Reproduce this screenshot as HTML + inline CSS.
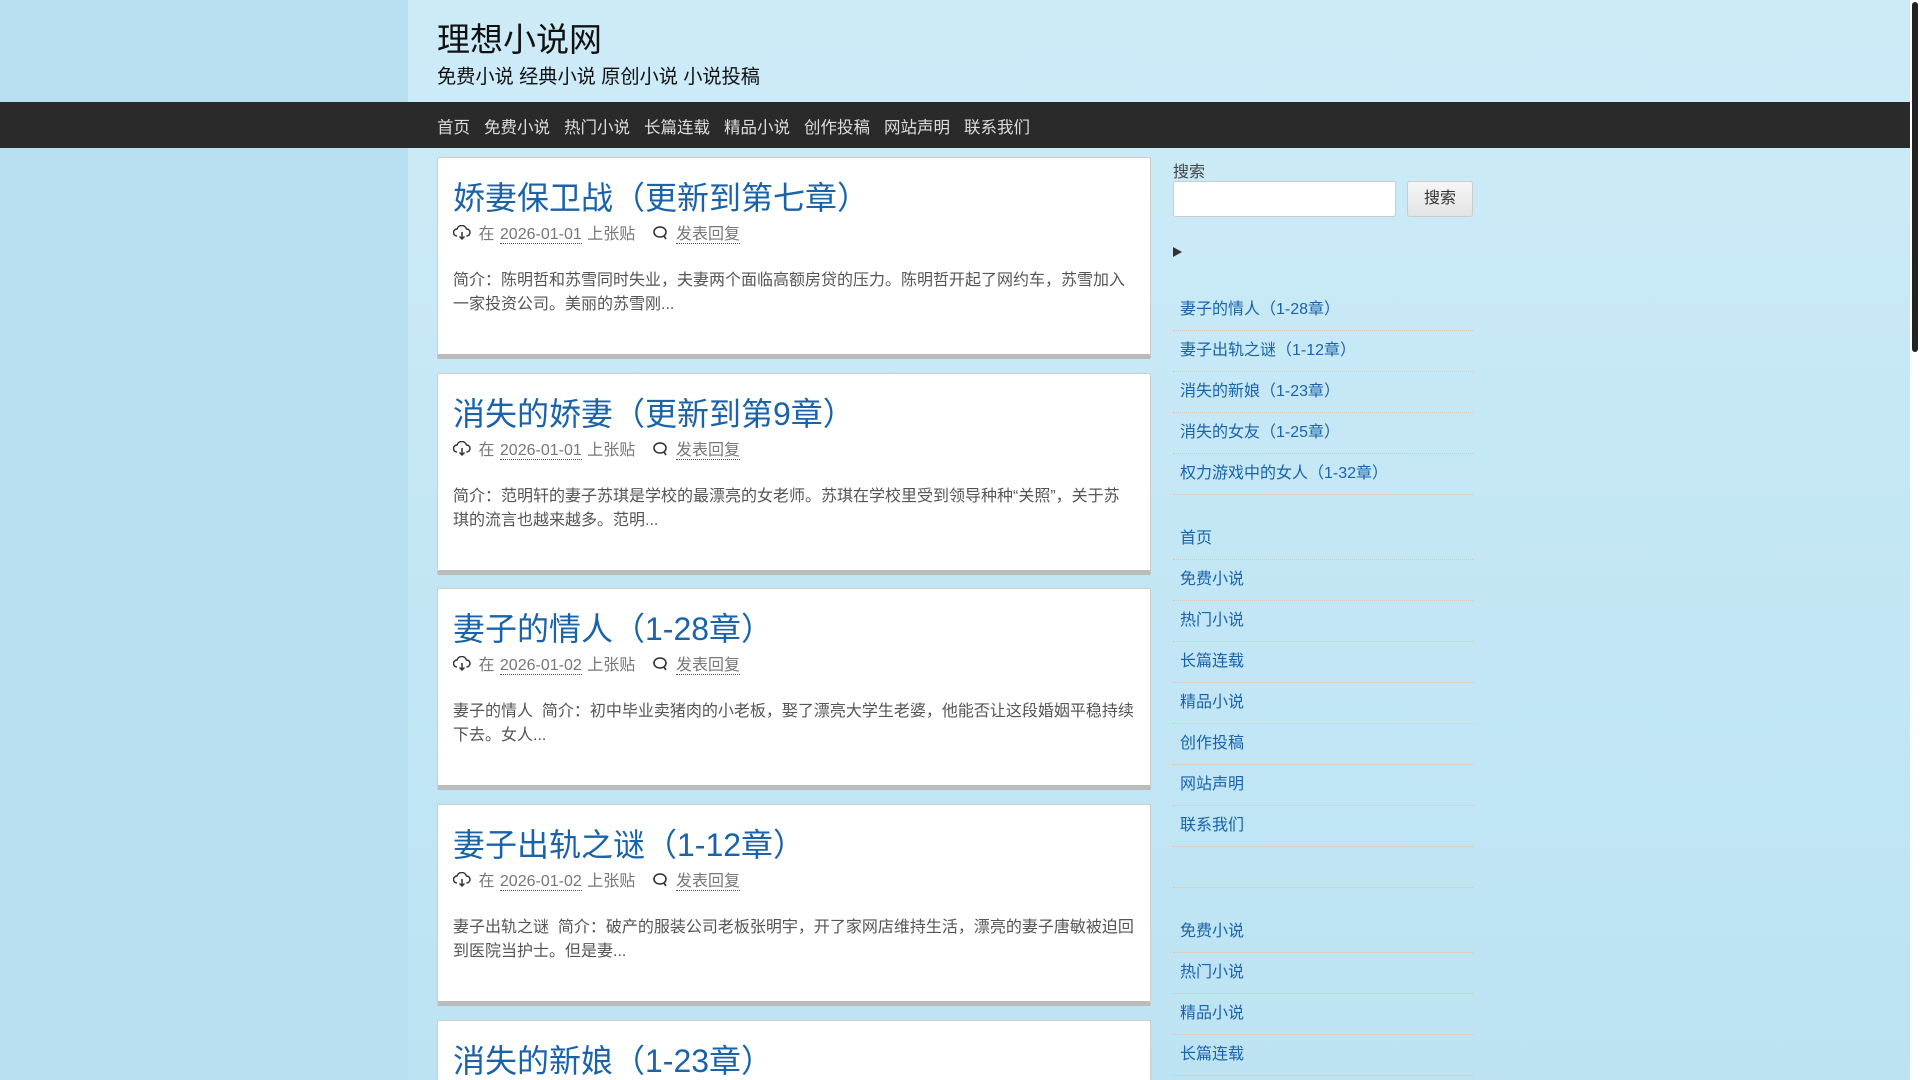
<!DOCTYPE html>
<html><head><meta charset="utf-8">
<style>
*{margin:0;padding:0;box-sizing:border-box}
html,body{width:1920px;height:1080px;overflow:hidden}
body{background:#b9e0f1;font-family:"Liberation Sans","Noto Sans CJK SC",sans-serif;position:relative}
#wrap{position:absolute;left:408px;top:0;width:1502px;height:1080px;background:linear-gradient(180deg,#cdebf7,#c2e6f5 60%,#bde3f3)}
#sb{position:absolute;right:0;top:0;width:10px;height:1080px;background:#fff}
#sb div{position:absolute;left:2px;top:2px;width:6px;height:350px;background:#222;border-radius:3px}
.t{position:absolute;left:437px;top:13px;font-size:33px;color:#111}
.st{position:absolute;left:437px;top:61px;font-size:19.2px;color:#111}
#nav{position:absolute;left:0;top:102px;width:1910px;height:46px;background:#2a2a2a}
#nav span{position:absolute;top:12px;font-size:16.5px;color:#ddd}
.card{position:absolute;left:437px;width:714px;height:202px;background:#fff;border:1px solid #ccc;border-bottom:5px solid #bbb;border-radius:2px;overflow:hidden}
.card h2{position:absolute;left:15px;top:15px;font-size:32px;font-weight:normal;color:#1a63a8;white-space:nowrap}
.meta{position:absolute;left:15px;top:62px;font-size:16px;color:#777;white-space:nowrap;word-spacing:1px}
.meta u{text-decoration:none;border-bottom:1px dotted #555}
.meta svg{vertical-align:-2px;margin-right:2px}
.ex{position:absolute;left:15px;top:111px;width:682px;font-size:16px;line-height:24px;color:#555}
.side{position:absolute;left:1173px;width:300px}
.li{position:absolute;left:1173px;width:300px;height:41px;border-bottom:1px dotted #d6c8b6;font-size:16px;color:#1a63a8;padding-left:7px;line-height:40px}
</style></head><body>
<div id="wrap"></div>
<div id="sb"><div></div></div>
<div class="t">理想小说网</div>
<div class="st">免费小说 经典小说 原创小说 小说投稿</div>
<div id="nav">
<span style="left:437px">首页</span><span style="left:484px">免费小说</span><span style="left:564px">热门小说</span><span style="left:644px">长篇连载</span><span style="left:724px">精品小说</span><span style="left:804px">创作投稿</span><span style="left:884px">网站声明</span><span style="left:964px">联系我们</span>
</div>

<div class="card" style="top:157px"><h2>娇妻保卫战（更新到第七章）</h2><div class="meta"><svg width="18" height="16" viewBox="0 0 18 16"><path d="M4 11a3.5 3.5 0 0 1 0-7a5 5 0 0 1 9.5 0a3.5 3.5 0 0 1 0 7M9 7v7M6.5 11.5L9 14l2.5-2.5" fill="none" stroke="#333" stroke-width="1.5"/></svg> 在 <u>2026-01-01</u> 上张贴 &nbsp;&nbsp;<svg width="17" height="16" viewBox="0 0 17 16"><path d="M8 2c3.5 0 6 2.2 6 5s-2.5 5-6 5-6-2.2-6-5 2.5-5 6-5zM12 11l2 3" fill="none" stroke="#333" stroke-width="1.6"/></svg> <u>发表回复</u></div><div class="ex">简介：陈明哲和苏雪同时失业，夫妻两个面临高额房贷的压力。陈明哲开起了网约车，苏雪加入一家投资公司。美丽的苏雪刚...</div></div>

<div class="card" style="top:373px"><h2>消失的娇妻（更新到第9章）</h2><div class="meta"><svg width="18" height="16" viewBox="0 0 18 16"><path d="M4 11a3.5 3.5 0 0 1 0-7a5 5 0 0 1 9.5 0a3.5 3.5 0 0 1 0 7M9 7v7M6.5 11.5L9 14l2.5-2.5" fill="none" stroke="#333" stroke-width="1.5"/></svg> 在 <u>2026-01-01</u> 上张贴 &nbsp;&nbsp;<svg width="17" height="16" viewBox="0 0 17 16"><path d="M8 2c3.5 0 6 2.2 6 5s-2.5 5-6 5-6-2.2-6-5 2.5-5 6-5zM12 11l2 3" fill="none" stroke="#333" stroke-width="1.6"/></svg> <u>发表回复</u></div><div class="ex">简介：范明轩的妻子苏琪是学校的最漂亮的女老师。苏琪在学校里受到领导种种“关照”，关于苏琪的流言也越来越多。范明...</div></div>

<div class="card" style="top:588px"><h2>妻子的情人（1-28章）</h2><div class="meta"><svg width="18" height="16" viewBox="0 0 18 16"><path d="M4 11a3.5 3.5 0 0 1 0-7a5 5 0 0 1 9.5 0a3.5 3.5 0 0 1 0 7M9 7v7M6.5 11.5L9 14l2.5-2.5" fill="none" stroke="#333" stroke-width="1.5"/></svg> 在 <u>2026-01-02</u> 上张贴 &nbsp;&nbsp;<svg width="17" height="16" viewBox="0 0 17 16"><path d="M8 2c3.5 0 6 2.2 6 5s-2.5 5-6 5-6-2.2-6-5 2.5-5 6-5zM12 11l2 3" fill="none" stroke="#333" stroke-width="1.6"/></svg> <u>发表回复</u></div><div class="ex">妻子的情人&nbsp;&nbsp;简介：初中毕业卖猪肉的小老板，娶了漂亮大学生老婆，他能否让这段婚姻平稳持续下去。女人...</div></div>

<div class="card" style="top:804px"><h2>妻子出轨之谜（1-12章）</h2><div class="meta"><svg width="18" height="16" viewBox="0 0 18 16"><path d="M4 11a3.5 3.5 0 0 1 0-7a5 5 0 0 1 9.5 0a3.5 3.5 0 0 1 0 7M9 7v7M6.5 11.5L9 14l2.5-2.5" fill="none" stroke="#333" stroke-width="1.5"/></svg> 在 <u>2026-01-02</u> 上张贴 &nbsp;&nbsp;<svg width="17" height="16" viewBox="0 0 17 16"><path d="M8 2c3.5 0 6 2.2 6 5s-2.5 5-6 5-6-2.2-6-5 2.5-5 6-5zM12 11l2 3" fill="none" stroke="#333" stroke-width="1.6"/></svg> <u>发表回复</u></div><div class="ex">妻子出轨之谜&nbsp;&nbsp;简介：破产的服装公司老板张明宇，开了家网店维持生活，漂亮的妻子唐敏被迫回到医院当护士。但是妻...</div></div>

<div class="card" style="top:1020px;height:60px;border-bottom:none"><h2>消失的新娘（1-23章）</h2></div>

<div class="side" style="top:158px;font-size:16px;color:#444">搜索</div>
<div style="position:absolute;left:1173px;top:181px;width:223px;height:36px;background:#fff;border:1px solid #ccc;border-radius:3px"></div>
<div style="position:absolute;left:1407px;top:181px;width:66px;height:36px;background:linear-gradient(#f6f6f6,#e4e4e4);border:1px solid #ccc;border-radius:3px;font-size:16px;color:#333;text-align:center;line-height:34px">搜索</div>
<div style="position:absolute;left:1173px;top:247px;width:0;height:0;border-left:9px solid #333;border-top:5.5px solid transparent;border-bottom:5.5px solid transparent"></div>

<div class="li" style="top:290px">妻子的情人（1-28章）</div>
<div class="li" style="top:331px">妻子出轨之谜（1-12章）</div>
<div class="li" style="top:372px">消失的新娘（1-23章）</div>
<div class="li" style="top:413px">消失的女友（1-25章）</div>
<div class="li" style="top:454px">权力游戏中的女人（1-32章）</div>

<div class="li" style="top:519px">首页</div>
<div class="li" style="top:560px">免费小说</div>
<div class="li" style="top:601px">热门小说</div>
<div class="li" style="top:642px">长篇连载</div>
<div class="li" style="top:683px">精品小说</div>
<div class="li" style="top:724px">创作投稿</div>
<div class="li" style="top:765px">网站声明</div>
<div class="li" style="top:806px">联系我们</div>
<div class="li" style="top:847px"></div>

<div class="li" style="top:912px">免费小说</div>
<div class="li" style="top:953px">热门小说</div>
<div class="li" style="top:994px">精品小说</div>
<div class="li" style="top:1035px">长篇连载</div>
</body></html>
